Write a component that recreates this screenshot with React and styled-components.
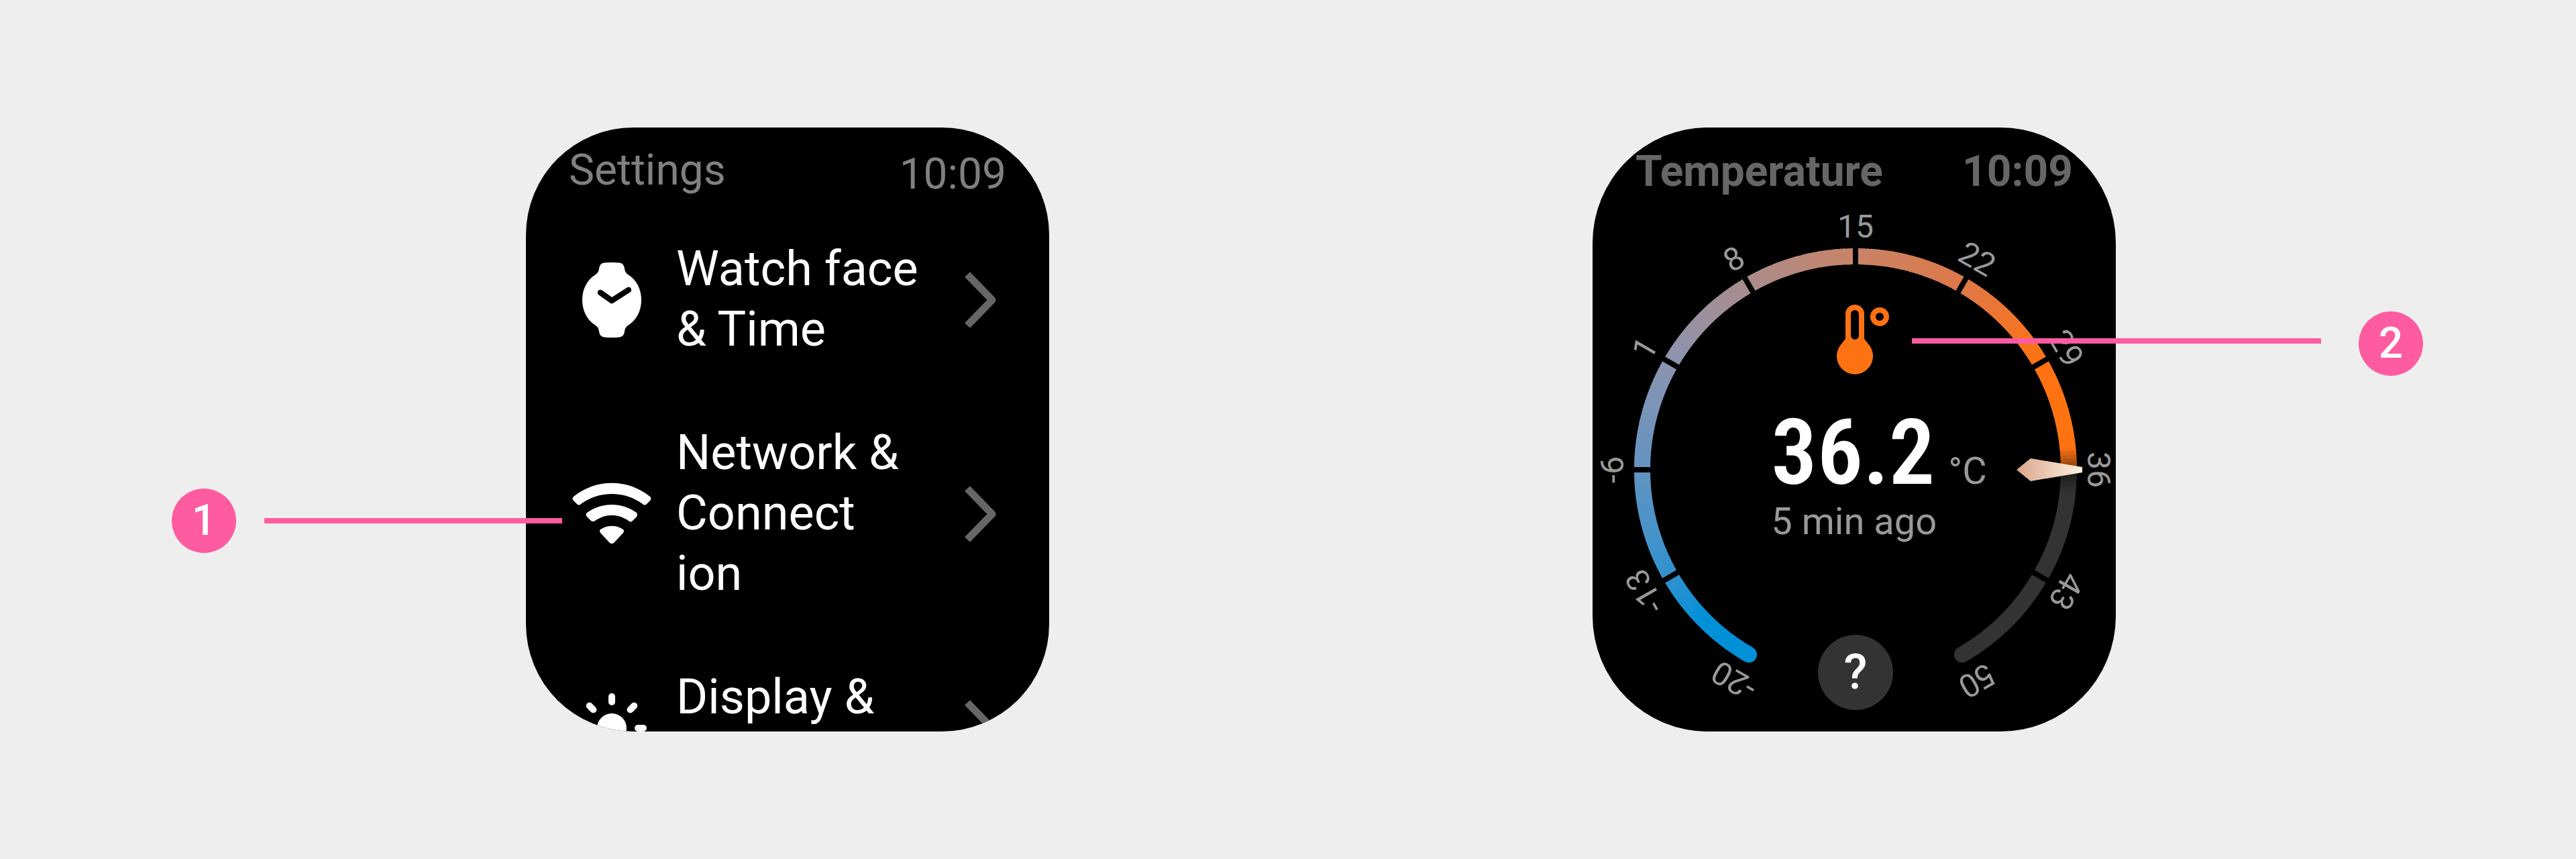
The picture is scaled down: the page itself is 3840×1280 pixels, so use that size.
import React from "react";
import styled, { createGlobalStyle, css } from "styled-components";

const PINK = "#ff5ba1";

const GlobalStyle = createGlobalStyle`
  *, *::before, *::after { box-sizing: border-box; }
  body {
    margin: 0;
    background: #eeeeee;
    font-family: Roboto, "Liberation Sans", sans-serif;
  }
  h1, p, ul, ol { margin: 0; padding: 0; list-style: none; }
  button { font: inherit; color: inherit; background: none; border: 0; padding: 0; }
`;

const Page = styled.main`
  min-height: 100vh;
  display: flex;
  align-items: center;
  justify-content: space-between;
  padding: 0 228px 0 256px;
`;

const Figure = styled.section`
  display: flex;
  align-items: flex-start;
`;

const Watch = styled.article`
  flex: none;
  display: flex;
  flex-direction: column;
  width: 780px;
  height: 900px;
  overflow: hidden;
  background: #000;
  color: #fff;
  border-radius: ${(p) => p.$radius}px;
`;

const StatusBar = styled.header`
  flex: none;
  display: flex;
  justify-content: space-between;
  align-items: ${(p) => (p.$strong ? "baseline" : "flex-end")};
  height: 108px;
  padding: 0 64px;
  font-size: 64px;
  line-height: 76px;
  color: ${(p) => (p.$strong ? "#666666" : "#808080")};
  font-weight: ${(p) => (p.$strong ? 700 : 400)};
  ${(p) => p.$strong && css`padding-top: 28px;`}
`;

const Title = styled.h1`
  font: inherit;
  ${(p) => p.$raised && css`padding-bottom: 6px;`}
`;

const Menu = styled.ul`
  padding-top: 11px;
`;

const MenuItem = styled.li``;

const MenuButton = styled.button`
  display: flex;
  align-items: center;
  width: 100%;
  gap: 36px;
  padding: 47px 60px 47px 68px;
  text-align: left;
  font-size: 72px;
  line-height: 90px;
`;

const MenuLabel = styled.span`
  flex: 1;
  min-height: 180px;
  white-space: pre-line;
`;

const Glyph = styled.svg`
  flex: none;
  display: block;
  width: ${(p) => p.$w}px;
  height: ${(p) => p.$h}px;
`;

const Callout = styled.aside`
  position: relative;
  z-index: 1;
  display: flex;
  align-items: center;
  gap: ${(p) => (p.$side === "left" ? 42 : 56)}px;
  margin-top: ${(p) => p.$top}px;
  ${(p) => (p.$side === "left" ? "margin-right: -54px;" : "margin-left: -304px;")}
`;

const Leader = styled.span`
  width: ${(p) => p.$length}px;
  height: 8px;
  margin-bottom: ${(p) => (p.$raised ? 8 : 0)}px;
  background: ${PINK};
`;

const Badge = styled.span`
  display: flex;
  align-items: center;
  justify-content: center;
  width: 96px;
  height: 96px;
  border-radius: 50%;
  background: ${PINK};
  color: #fff;
  font-size: 64px;
  line-height: 76px;
  font-weight: 500;
`;

const Gauge = styled.div`
  position: relative;
  flex: 1;
  display: flex;
  flex-direction: column;
  align-items: center;
`;

const Dial = styled.svg`
  position: absolute;
  left: 0;
  top: 0;
  width: 780px;
  height: 792px;
`;

const DialText = styled.text`
  font-size: 48px;
  fill: #999999;
  text-anchor: middle;
`;

const Readout = styled.div`
  position: relative;
  display: flex;
  flex-direction: column;
  align-items: center;
  padding-top: 156px;
`;

const Reading = styled.div`
  display: flex;
  flex-direction: column;
  padding: 48px 0 0 74px;
`;

const Value = styled.p`
  display: flex;
  align-items: baseline;
  gap: 20px;
  font-size: 136px;
  line-height: 138px;
  font-weight: 600;
  font-family: "Roboto Condensed", Roboto, sans-serif;
`;

const Unit = styled.span`
  font: 400 56px/66px Roboto, sans-serif;
  color: #999999;
`;

const Ago = styled.p`
  font-size: 56px;
  line-height: 66px;
  color: #999999;
`;

const HelpButton = styled.button`
  position: relative;
  width: 112px;
  height: 112px;
  margin: auto 0 32px 4px;
  border-radius: 50%;
  background: #333333;
  color: #fff;
  font-size: 72px;
  line-height: 84px;
  font-weight: 500;
`;

function Chevron() {
  return (
    <Glyph $w={84} $h={84} viewBox="0 0 84 84" aria-hidden="true">
      <path d="M22 5 L59 43 L22 81" fill="none" stroke="#666666" strokeWidth="11" strokeLinejoin="round" />
    </Glyph>
  );
}

function WatchIcon() {
  return (
    <Glyph $w={120} $h={120} viewBox="0 0 120 120" aria-hidden="true">
      <path fill="#fff" d="M41 14 Q42 6 49 5.500 Q60 4.500 71 5.500 Q78 6 79 14 Q79.500 20 84 23 C97 31 104 45 104 61 C104 77 97 91 84 99 Q79.500 102 79 108 Q78 116 71 116.500 Q60 117.500 49 116.500 Q42 116 41 108 Q40.500 102 36 99 C23 91 16 77 16 61 C16 45 23 31 36 23 Q40.500 20 41 14 Z" />
      <path fill="none" stroke="#000" strokeWidth="8.500" strokeLinecap="round" strokeLinejoin="round" d="M43 50 L60 62 L85 46" />
    </Glyph>
  );
}

function WifiIcon() {
  return (
    <Glyph $w={120} $h={120} viewBox="0 0 120 120" aria-hidden="true">
      <g fill="#fff">
        <path d="M3 35 C36 8 84 8 117 35 Q120 38 117 41 L112 46 Q109 49 106 46 C79 26 41 26 14 46 Q11 49 8 46 L3 41 Q0 38 3 35 Z" />
        <path d="M23 59 C45 43 75 43 97 59 Q99 62 97 65 L91 71 Q88 74 85 71 C69 60 51 60 35 71 Q32 73 29 71 L23 65 Q20 62 23 59 Z" />
        <path d="M43 84 C53 77 67 77 77 84 Q79 86 77 89 L63 104 Q60 106 57 104 L43 89 Q41 86 43 84 Z" />
      </g>
    </Glyph>
  );
}

function SunIcon() {
  return (
    <Glyph $w={120} $h={120} viewBox="0 0 120 120" aria-hidden="true">
      <circle cx="60" cy="61" r="22" fill="#fff" />
      {[0, 45, 90, 135, 180, 225, 270, 315].map((a) => (
        <rect key={a} x="55" y="9" width="10" height="18" rx="5" fill="#fff" transform={`rotate(${a} 60 61)`} />
      ))}
    </Glyph>
  );
}

function ThermometerIcon() {
  return (
    <Glyph $w={108} $h={104} viewBox="0 0 108 104" aria-hidden="true">
      <g fill="#ff7212">
        <path fillRule="evenodd" d="M41 14 A14 14 0 0 1 69 14 V51 L77 61 A27 27 0 1 1 33 61 L41 51 Z M49 14 V46 A6 6 0 0 0 61 46 V14 A6 6 0 0 0 49 14 Z" />
        <circle cx="92" cy="18" r="10" fill="none" stroke="#ff7212" strokeWidth="8" />
      </g>
    </Glyph>
  );
}

const CX = 392;
const CY = 402;
const R = 318;

const STOPS = [
  [-150, 0, 144, 216],
  [-135, 0, 144, 216],
  [-120, 48, 146, 207],
  [-90, 98, 148, 192],
  [-60, 140, 148, 176],
  [-30, 170, 140, 140],
  [0, 200, 132, 104],
  [30, 222, 120, 72],
  [60, 255, 114, 18],
  [84, 255, 114, 18],
  [90, 130, 60, 12],
];

const polar = (deg, r) => {
  const a = (deg * Math.PI) / 180;
  return [CX + r * Math.sin(a), CY - r * Math.cos(a)];
};

const arc = (from, to) => {
  const [x1, y1] = polar(from, R);
  const [x2, y2] = polar(to, R);
  return `M${x1} ${y1} A${R} ${R} 0 0 1 ${x2} ${y2}`;
};

const colorAt = (deg) => {
  const i = Math.max(1, STOPS.findIndex((s) => s[0] >= deg));
  const a = STOPS[i - 1];
  const b = STOPS[i];
  const t = (deg - a[0]) / (b[0] - a[0]);
  const mix = (k) => Math.round(a[k] + (b[k] - a[k]) * t);
  return `rgb(${mix(1)}, ${mix(2)}, ${mix(3)})`;
};

const SLICES = Array.from({ length: 240 }, (_, i) => -150 + i);
const MARKS = [-20, -13, -6, 1, 8, 15, 22, 29, 36, 43, 50].map((value, i) => ({ value, deg: -150 + i * 30 }));

function TemperatureDial() {
  return (
    <Dial viewBox="0 0 780 792" role="img" aria-label="Temperature scale">
      <defs>
        <linearGradient id="needle" x1="0" x2="1" y1="0" y2="0">
          <stop offset="0" stopColor="#d9a68c" />
          <stop offset="1" stopColor="#fff0e0" />
        </linearGradient>
        <linearGradient id="shade" x1="0" x2="0" y1="0" y2="1">
          <stop offset="0" stopColor="#000" stopOpacity="0.5" />
          <stop offset="1" stopColor="#000" stopOpacity="0" />
        </linearGradient>
      </defs>
      <path d={arc(90, 150)} fill="none" stroke="#333333" strokeWidth="24" strokeLinecap="round" />
      <rect x="690" y="402" width="40" height="36" fill="url(#shade)" />
      <path d={arc(-150, -149)} fill="none" stroke="rgb(0, 144, 216)" strokeWidth="24" strokeLinecap="round" />
      {SLICES.map((d) => (
        <path key={d} d={arc(d, Math.min(90, d + 1.3))} fill="none" stroke={colorAt(d + 0.5)} strokeWidth="24" />
      ))}
      {MARKS.slice(1, -1).filter((m) => m.value !== 36).map((m) => (
        <rect key={m.value} x={CX - 4} y={CY - R - 14} width="8" height="28" fill="#000" transform={`rotate(${m.deg} ${CX} ${CY})`} />
      ))}
      {MARKS.map((m) => (
        <DialText key={m.value} x={CX} y={CY - 346} transform={`rotate(${m.deg} ${CX} ${CY})`}>{m.value}</DialText>
      ))}
      <path fill="url(#needle)" d="M632 402 L653 385 L730 398 V406 L653 419 Z" />
    </Dial>
  );
}

const ITEMS = [
  { label: "Watch face\n& Time", Icon: WatchIcon },
  { label: "Network &\nConnect\nion", Icon: WifiIcon },
  { label: "Display &", Icon: SunIcon },
];

export default function App() {
  return (
    <>
      <GlobalStyle />
      <Page>
        <Figure>
          <Callout $side="left" $top={538}>
            <Badge>1</Badge>
            <Leader $length={444} />
          </Callout>
          <Watch $radius={160}>
            <StatusBar>
              <Title $raised>Settings</Title>
              <time>10:09</time>
            </StatusBar>
            <Menu>
              {ITEMS.map(({ label, Icon }) => (
                <MenuItem key={label}>
                  <MenuButton type="button">
                    <Icon />
                    <MenuLabel>{label}</MenuLabel>
                    <Chevron />
                  </MenuButton>
                </MenuItem>
              ))}
            </Menu>
          </Watch>
        </Figure>
        <Figure>
          <Watch $radius={172}>
            <StatusBar $strong>
              <Title>Temperature</Title>
              <time>10:09</time>
            </StatusBar>
            <Gauge>
              <TemperatureDial />
              <Readout>
                <ThermometerIcon />
                <Reading>
                  <Value>36.2<Unit>°C</Unit></Value>
                  <Ago>5 min ago</Ago>
                </Reading>
              </Readout>
              <HelpButton type="button" aria-label="Help">?</HelpButton>
            </Gauge>
          </Watch>
          <Callout $side="right" $top={274}>
            <Leader $length={610} $raised />
            <Badge>2</Badge>
          </Callout>
        </Figure>
      </Page>
    </>
  );
}
